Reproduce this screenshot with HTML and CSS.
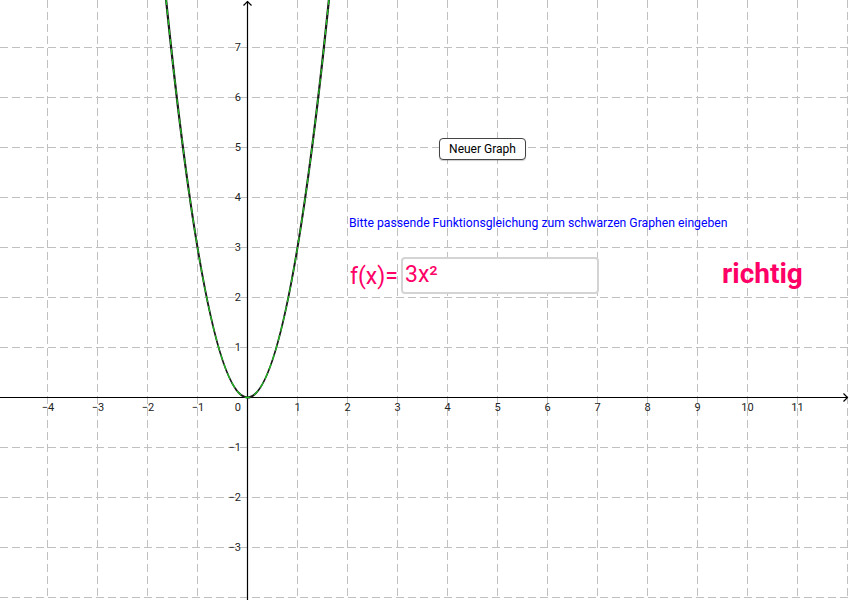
FILE: index.html
```html
<!DOCTYPE html>
<html lang="de">
<head>
<meta charset="utf-8">
<title>Funktionsgraph</title>
<link rel="stylesheet" href="styles.css">
</head>
<body>
<div class="stage">
  <svg class="plot" width="850" height="600" viewBox="0 0 850 600" xmlns="http://www.w3.org/2000/svg">
    <g class="grid">
      <line x1="47.5" y1="0" x2="47.5" y2="600"/>
      <line x1="97.5" y1="0" x2="97.5" y2="600"/>
      <line x1="147.5" y1="0" x2="147.5" y2="600"/>
      <line x1="197.5" y1="0" x2="197.5" y2="600"/>
      <line x1="297.5" y1="0" x2="297.5" y2="600"/>
      <line x1="347.5" y1="0" x2="347.5" y2="600"/>
      <line x1="397.5" y1="0" x2="397.5" y2="600"/>
      <line x1="447.5" y1="0" x2="447.5" y2="600"/>
      <line x1="497.5" y1="0" x2="497.5" y2="600"/>
      <line x1="547.5" y1="0" x2="547.5" y2="600"/>
      <line x1="597.5" y1="0" x2="597.5" y2="600"/>
      <line x1="647.5" y1="0" x2="647.5" y2="600"/>
      <line x1="697.5" y1="0" x2="697.5" y2="600"/>
      <line x1="747.5" y1="0" x2="747.5" y2="600"/>
      <line x1="797.5" y1="0" x2="797.5" y2="600"/>
      <line x1="847.5" y1="0" x2="847.5" y2="600"/>
      <line x1="0" y1="47.5" x2="850" y2="47.5"/>
      <line x1="0" y1="97.5" x2="850" y2="97.5"/>
      <line x1="0" y1="147.5" x2="850" y2="147.5"/>
      <line x1="0" y1="197.5" x2="850" y2="197.5"/>
      <line x1="0" y1="247.5" x2="850" y2="247.5"/>
      <line x1="0" y1="297.5" x2="850" y2="297.5"/>
      <line x1="0" y1="347.5" x2="850" y2="347.5"/>
      <line x1="0" y1="447.5" x2="850" y2="447.5"/>
      <line x1="0" y1="497.5" x2="850" y2="497.5"/>
      <line x1="0" y1="547.5" x2="850" y2="547.5"/>
      <line x1="0" y1="597.5" x2="850" y2="597.5"/>
    </g>
    <g class="axes">
      <line x1="0" y1="397.5" x2="848" y2="397.5"/>
      <line x1="247.5" y1="1" x2="247.5" y2="600"/>
      <polyline points="243.5,5.5 247.5,1.5 251.5,5.5"/>
      <polyline points="843.5,393.5 847.5,397.5 843.5,401.5"/>
    </g>
    <g class="xlabels">
      <text x="48" y="411">−4</text>
      <text x="98" y="411">−3</text>
      <text x="148" y="411">−2</text>
      <text x="198" y="411">−1</text>
      <text x="297.5" y="411">1</text>
      <text x="347.5" y="411">2</text>
      <text x="397.5" y="411">3</text>
      <text x="447.5" y="411">4</text>
      <text x="497.5" y="411">5</text>
      <text x="547.5" y="411">6</text>
      <text x="597.5" y="411">7</text>
      <text x="647.5" y="411">8</text>
      <text x="697.5" y="411">9</text>
      <text x="747.5" y="411">10</text>
      <text x="797.5" y="411">11</text>
    </g>
    <g class="ylabels">
      <text x="241" y="411">0</text>
      <text x="241" y="51">7</text>
      <text x="241" y="101">6</text>
      <text x="241" y="151">5</text>
      <text x="241" y="201">4</text>
      <text x="241" y="251">3</text>
      <text x="241" y="301">2</text>
      <text x="241" y="351">1</text>
      <text x="241" y="451">−1</text>
      <text x="241" y="501">−2</text>
      <text x="241" y="551">−3</text>
    </g>
    <path class="curve-black" d="M166 -1.1 Q247.5 796.1 329 -1.1"/>
    <path class="curve-green" d="M166 -1.1 Q247.5 796.1 329 -1.1"/>
  </svg>

  <button class="new-graph" type="button">Neuer Graph</button>
  <p class="hint">Bitte passende Funktionsgleichung zum schwarzen Graphen eingeben</p>
  <label class="fx-label" for="fx">f(x)=</label>
  <div class="fx-input" id="fx">3x²</div>
  <p class="result">richtig</p>
</div>
</body>
</html>
```

FILE: styles.css
```css
html, body {
  margin: 0;
  padding: 0;
  background: #ffffff;
}

body {
  font-family: Roboto, "Liberation Sans", sans-serif;
}

.stage {
  position: relative;
  width: 850px;
  height: 600px;
  overflow: hidden;
}

.plot {
  display: block;
}

.grid line {
  stroke: #c0c0c0;
  stroke-width: 1;
  stroke-dasharray: 8 4;
}

.axes line,
.axes polyline {
  stroke: #000000;
  stroke-width: 1.2;
  fill: none;
}

.xlabels text,
.ylabels text {
  font-family: Roboto, "Liberation Sans", sans-serif;
  font-size: 11px;
  fill: #222222;
}

.xlabels text {
  text-anchor: middle;
}

.ylabels text {
  text-anchor: end;
}

.curve-black {
  fill: none;
  stroke: #1a1a1a;
  stroke-width: 2.2;
}

.curve-green {
  fill: none;
  stroke: #22bb22;
  stroke-width: 1.3;
  stroke-dasharray: 6 4;
}

.new-graph {
  position: absolute;
  left: 439px;
  top: 138px;
  width: 87px;
  height: 22px;
  padding: 0;
  border: 1.5px solid #444444;
  border-radius: 4px;
  background: #ffffff;
  font-family: Roboto, "Liberation Sans", sans-serif;
  font-size: 12px;
  color: #000000;
  box-shadow: 0 1px 1px rgba(0, 0, 0, 0.2);
}

.hint {
  position: absolute;
  left: 349px;
  top: 216px;
  margin: 0;
  font-size: 12.2px;
  line-height: 14px;
  color: #0000ff;
  white-space: nowrap;
}

.fx-label {
  position: absolute;
  left: 350px;
  top: 262px;
  font-size: 23px;
  line-height: 30px;
  color: #ff0066;
}

.fx-input {
  position: absolute;
  left: 401px;
  top: 257px;
  width: 192px;
  height: 33px;
  padding: 0 0 0 2px;
  border: 2px solid #d4d4d4;
  border-radius: 4px;
  background: #ffffff;
  font-size: 23px;
  line-height: 31px;
  color: #ff0066;
}

.result {
  position: absolute;
  left: 722px;
  top: 256px;
  margin: 0;
  font-size: 28px;
  font-weight: 700;
  line-height: 36px;
  color: #ff0066;
}
```
